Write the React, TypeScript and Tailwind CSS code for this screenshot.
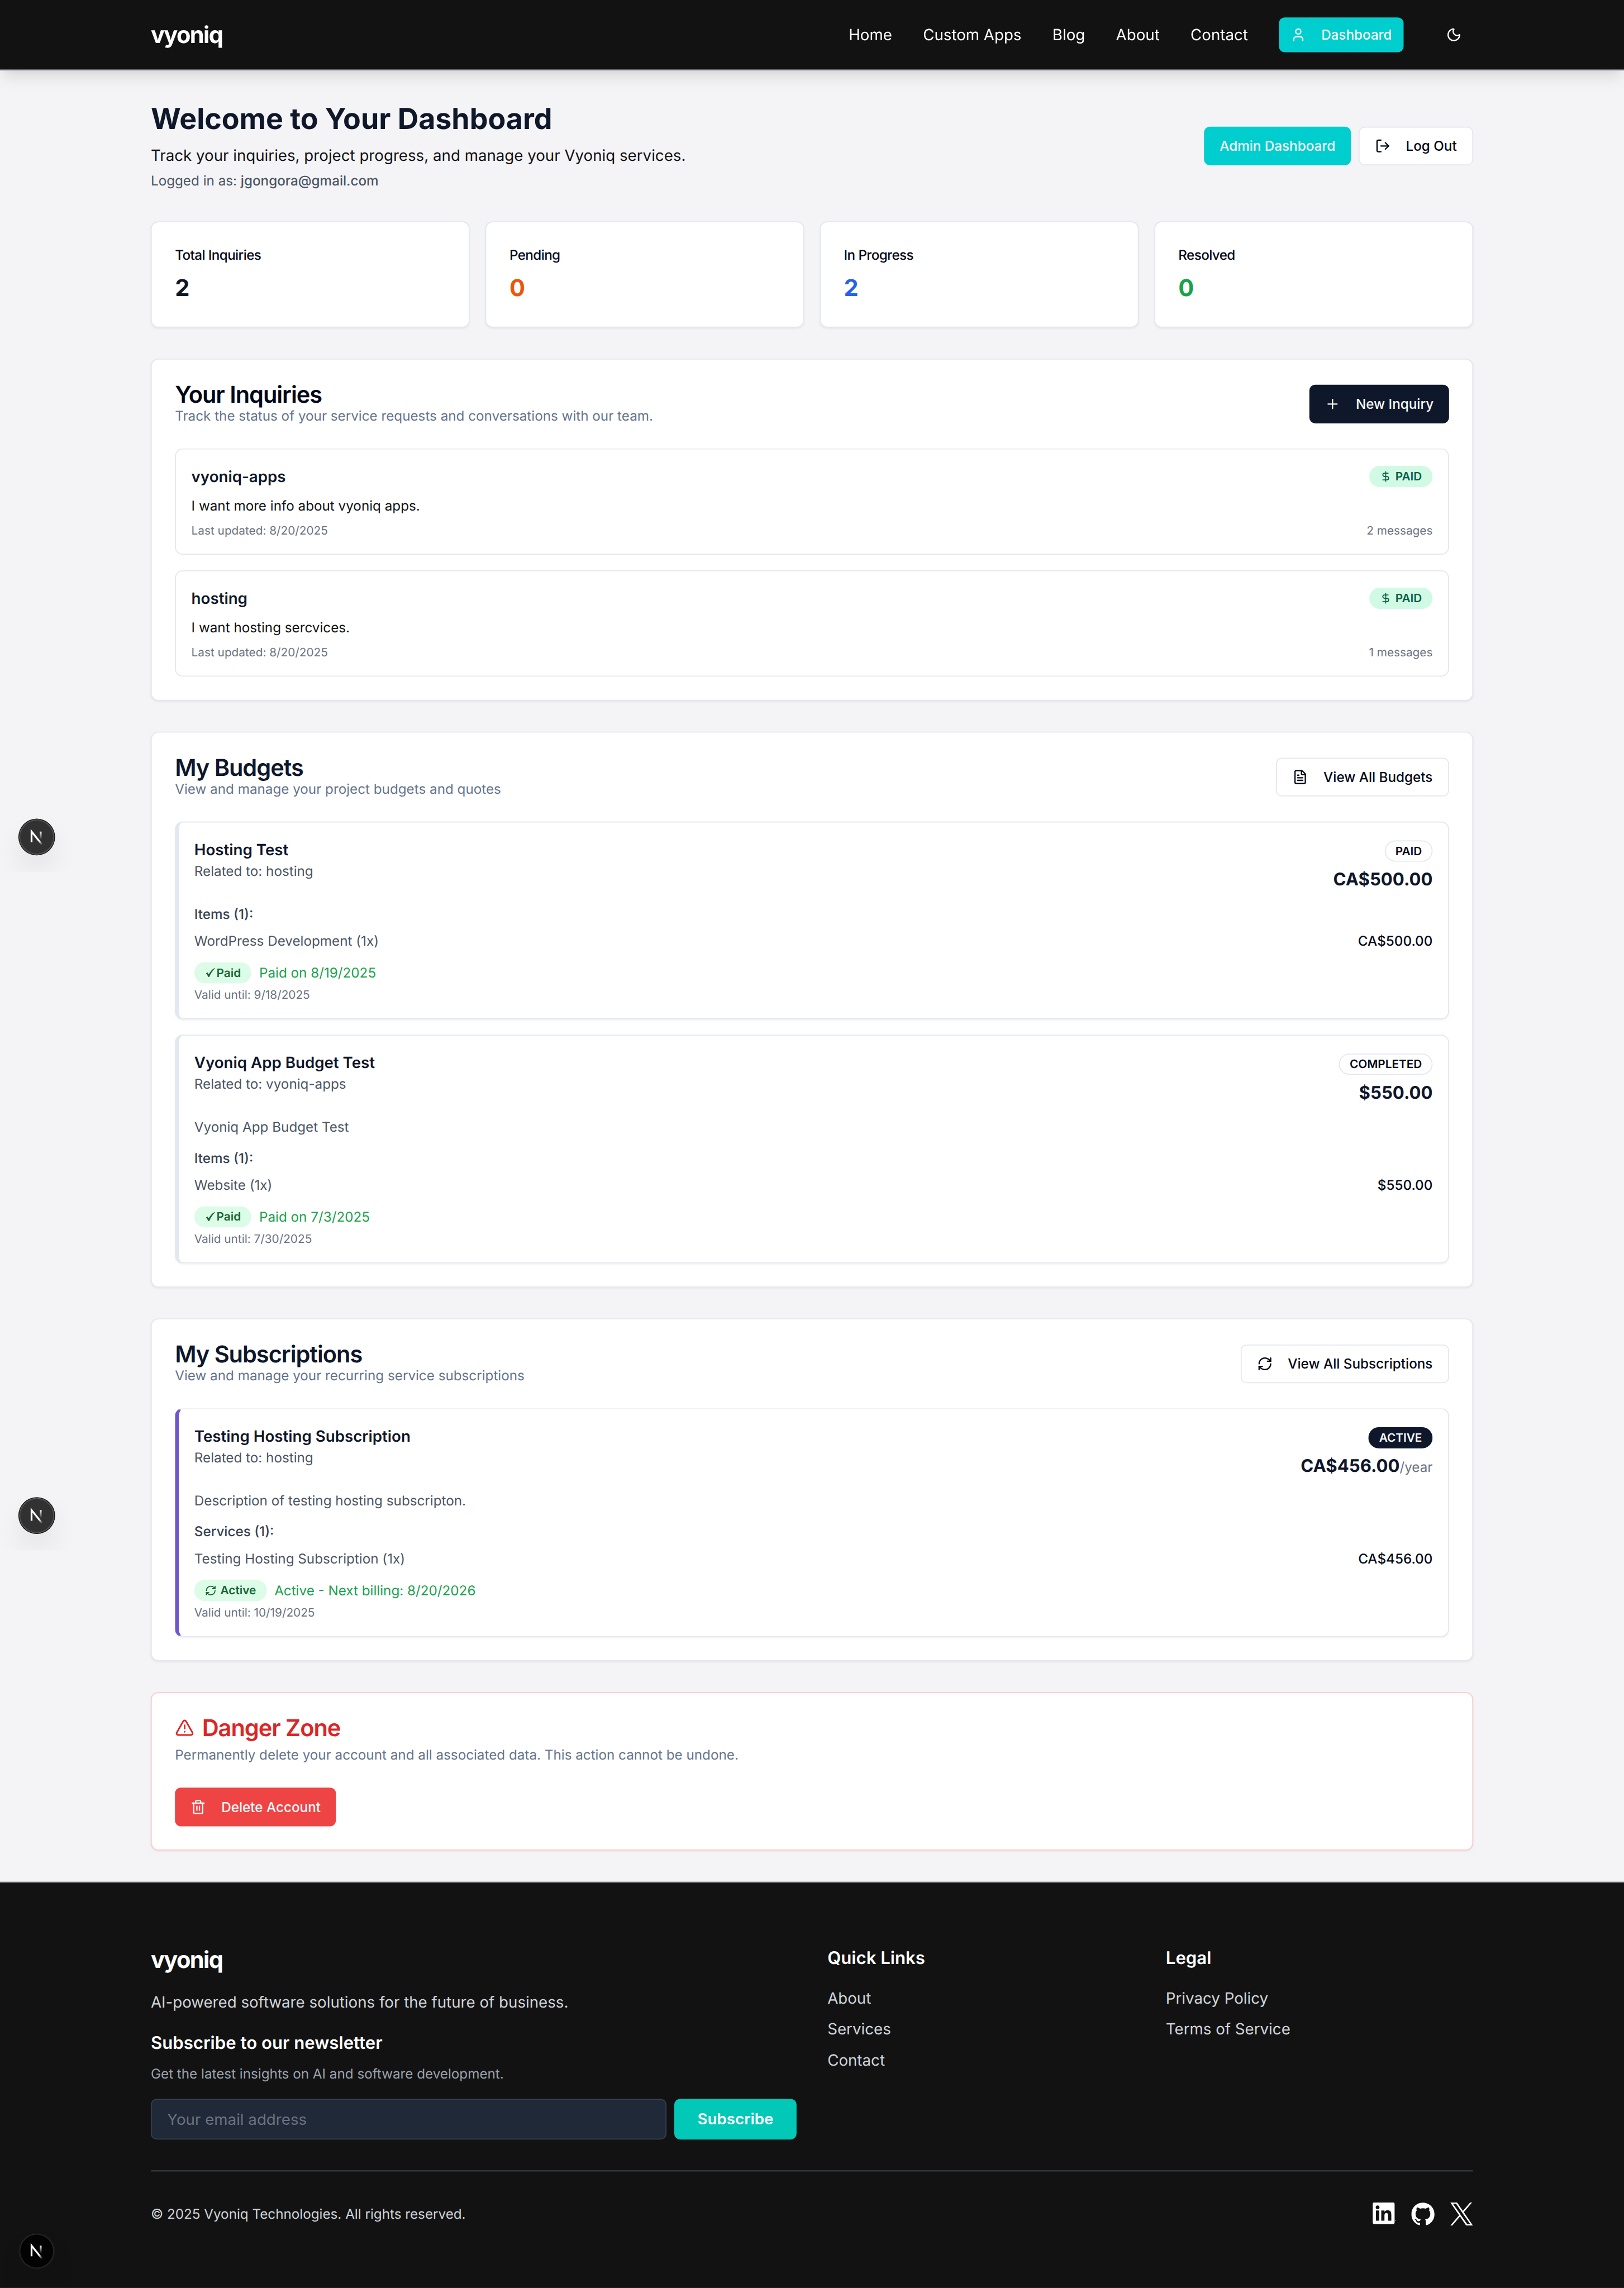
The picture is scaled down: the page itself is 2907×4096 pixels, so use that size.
import React from "react";
import {
  DollarSign,
  FileText,
  LogOut,
  Moon,
  Plus,
  RefreshCw,
  Trash2,
  TriangleAlert,
  User,
} from "lucide-react";

const card =
  "rounded-lg border border-[#e2e8f0] bg-white shadow-[0_1px_2px_0_rgba(0,0,0,0.05)]";
const button =
  "inline-flex items-center justify-center gap-2 whitespace-nowrap rounded-md text-sm font-medium";
const outlineButton = `${button} h-10 border border-[#e2e8f0] bg-white px-4 text-[#020817]`;
const pill =
  "inline-flex items-center rounded-full border px-2.5 py-0.5 text-xs font-semibold";

function Header() {
  return (
    <header className="relative z-10 border-b border-[#e2e8f0] bg-[#121212] shadow-[0_10px_15px_-3px_rgba(0,0,0,0.1),0_4px_6px_-4px_rgba(0,0,0,0.1)]">
      <div className="mx-auto flex h-[72px] max-w-[1400px] items-center justify-between px-4">
        <a className="text-2xl font-bold tracking-[-0.038em] text-white">vyoniq</a>
        <nav className="flex items-center gap-8 text-base text-white">
          {["Home", "Custom Apps", "Blog", "About", "Contact"].map((label) => (
            <a key={label}>{label}</a>
          ))}
          <button className={`${button} h-9 bg-[#00cece] px-3 text-white`}>
            <User className="mr-2 size-4" />
            Dashboard
          </button>
          <button className="flex size-10 items-center justify-center">
            <Moon className="size-4" />
          </button>
        </nav>
      </div>
    </header>
  );
}

const stats = [
  { label: "Total Inquiries", value: "2", color: "text-[#0f172a]" },
  { label: "Pending", value: "0", color: "text-[#ea580c]" },
  { label: "In Progress", value: "2", color: "text-[#2563eb]" },
  { label: "Resolved", value: "0", color: "text-[#16a34a]" },
];

function SectionHeader({
  title,
  description,
  color,
  children,
}: {
  title: string;
  description: string;
  color: string;
  children: React.ReactNode;
}) {
  return (
    <div className="flex items-center justify-between p-6">
      <div>
        <h3 className={`text-2xl leading-none font-semibold tracking-tight ${color}`}>{title}</h3>
        <p className="text-sm text-[#64748b]">{description}</p>
      </div>
      {children}
    </div>
  );
}

function Inquiry({ title, text, messages }: { title: string; text: string; messages: string }) {
  return (
    <div className="rounded-lg border border-[#e5e7eb] p-4">
      <div className="mb-2 flex items-center justify-between">
        <h4 className="text-base font-semibold text-[#0f172a]">{title}</h4>
        <span className={`${pill} gap-1 border-transparent bg-[#d1fae5] text-[#065f46]`}>
          <DollarSign className="size-3" />
          PAID
        </span>
      </div>
      <p className="mb-2 text-sm text-[#121212]">{text}</p>
      <div className="flex items-center justify-between text-xs text-[#6b7280]">
        <span>Last updated: 8/20/2025</span>
        <span>{messages}</span>
      </div>
    </div>
  );
}

function CheckMark() {
  return (
    <svg viewBox="0 0 12 12" className="size-3" fill="currentColor">
      <path d="M1.1 6.700 2.500 5.500 4 7.500C5.300 4.900 7.200 2.600 9.900 1L10.300 1.500C7.800 3.900 6 6.700 4.500 10.300L3.500 10.300C2.900 8.900 2.100 7.700 1.100 6.700Z" />
    </svg>
  );
}

function Agreement({
  title,
  related,
  description,
  status,
  statusClass,
  total,
  period,
  itemsLabel,
  item,
  itemPrice,
  badge,
  note,
  valid,
  accent,
}: {
  title: string;
  related: string;
  description?: string;
  status: string;
  statusClass: string;
  total: string;
  period?: string;
  itemsLabel: string;
  item: string;
  itemPrice: string;
  badge: React.ReactNode;
  note: string;
  valid: string;
  accent: string;
}) {
  return (
    <div className={`${card} border-l-4 p-4 ${accent}`}>
      <div className="mb-3 flex items-start justify-between">
        <div>
          <h4 className="text-base font-semibold text-[#0f172a]">{title}</h4>
          <p className="text-sm text-[#4b5563]">Related to: {related}</p>
        </div>
        <div className="text-right">
          <div className={`${pill} ${statusClass}`}>{status}</div>
          <p className="mt-1 text-lg font-bold text-[#0f172a]">
            {total}
            {period && <span className="text-sm font-normal text-[#6b7280]">{period}</span>}
          </p>
        </div>
      </div>
      {description && <p className="mb-3 text-sm text-[#4b5563]">{description}</p>}
      <p className="mb-2 text-sm font-medium text-[#374151]">{itemsLabel}</p>
      <div className="mb-3 flex justify-between text-sm">
        <span className="text-[#4b5563]">{item}</span>
        <span className="font-medium text-[#020817]">{itemPrice}</span>
      </div>
      <div className="flex items-center gap-2">
        <span className={`${pill} border-transparent bg-[#dcfce7] text-[#166534]`}>{badge}</span>
        <span className="text-sm text-[#16a34a]">{note}</span>
      </div>
      <p className="mt-1 text-xs text-[#6b7280]">{valid}</p>
    </div>
  );
}

function Main() {
  return (
    <main className="mx-auto max-w-[1400px] px-4 py-8">
      <div className="mb-8 flex items-center justify-between">
        <div>
          <h1 className="text-3xl font-bold text-[#0f172a]">Welcome to Your Dashboard</h1>
          <p className="mt-2 text-base text-[#121212]">
            Track your inquiries, project progress, and manage your Vyoniq services.
          </p>
          <p className="mt-1 text-sm text-[#4b5563]">
            Logged in as: <span className="font-medium">jgongora@gmail.com</span>
          </p>
        </div>
        <div className="flex gap-2">
          <button className={`${button} h-10 bg-[#00cece] px-4 text-white`}>Admin Dashboard</button>
          <button className={outlineButton}>
            <LogOut className="mr-2 size-4" />
            Log Out
          </button>
        </div>
      </div>

      <div className="mb-8 grid grid-cols-4 gap-4">
        {stats.map((s) => (
          <div key={s.label} className={`${card} p-6`}>
            <h3 className="mb-2 text-sm font-medium tracking-tight text-[#020817]">{s.label}</h3>
            <div className={`text-2xl font-bold ${s.color}`}>{s.value}</div>
          </div>
        ))}
      </div>

      <section className={`${card} mb-8`}>
        <SectionHeader
          title="Your Inquiries"
          description="Track the status of your service requests and conversations with our team."
          color="text-[#020817]"
        >
          <button className={`${button} h-10 bg-[#0f172a] px-4 text-[#f8fafc]`}>
            <Plus className="mr-2 size-4" />
            New Inquiry
          </button>
        </SectionHeader>
        <div className="space-y-4 px-6 pb-6">
          <Inquiry
            title="vyoniq-apps"
            text="I want more info about vyoniq apps."
            messages="2 messages"
          />
          <Inquiry title="hosting" text="I want hosting sercvices." messages="1 messages" />
        </div>
      </section>

      <section className={`${card} mb-8`}>
        <SectionHeader
          title="My Budgets"
          description="View and manage your project budgets and quotes"
          color="text-[#0f172a]"
        >
          <button className={outlineButton}>
            <FileText className="mr-2 size-4" />
            View All Budgets
          </button>
        </SectionHeader>
        <div className="space-y-4 px-6 pb-6">
          <Agreement
            title="Hosting Test"
            related="hosting"
            status="PAID"
            statusClass="border-[#e2e8f0] text-[#020817]"
            total="CA$500.00"
            itemsLabel="Items (1):"
            item="WordPress Development (1x)"
            itemPrice="CA$500.00"
            badge={
              <>
                <CheckMark />
                Paid
              </>
            }
            note="Paid on 8/19/2025"
            valid="Valid until: 9/18/2025"
            accent="border-l-[#e2e8f0]"
          />
          <Agreement
            title="Vyoniq App Budget Test"
            related="vyoniq-apps"
            description="Vyoniq App Budget Test"
            status="COMPLETED"
            statusClass="border-[#e2e8f0] text-[#020817]"
            total="$550.00"
            itemsLabel="Items (1):"
            item="Website (1x)"
            itemPrice="$550.00"
            badge={
              <>
                <CheckMark />
                Paid
              </>
            }
            note="Paid on 7/3/2025"
            valid="Valid until: 7/30/2025"
            accent="border-l-[#e2e8f0]"
          />
        </div>
      </section>

      <section className={`${card} mb-8`}>
        <SectionHeader
          title="My Subscriptions"
          description="View and manage your recurring service subscriptions"
          color="text-[#0f172a]"
        >
          <button className={outlineButton}>
            <RefreshCw className="mr-2 size-4" />
            View All Subscriptions
          </button>
        </SectionHeader>
        <div className="px-6 pb-6">
          <Agreement
            title="Testing Hosting Subscription"
            related="hosting"
            description="Description of testing hosting subscripton."
            status="ACTIVE"
            statusClass="border-transparent bg-[#0f172a] text-[#f8fafc]"
            total="CA$456.00"
            period="/year"
            itemsLabel="Services (1):"
            item="Testing Hosting Subscription (1x)"
            itemPrice="CA$456.00"
            badge={
              <>
                <RefreshCw className="mr-1 size-3" />
                Active
              </>
            }
            note="Active - Next billing: 8/20/2026"
            valid="Valid until: 10/19/2025"
            accent="border-l-[#6e56cf]"
          />
        </div>
      </section>

      <section className="rounded-lg border border-[#fecaca] bg-white p-6 shadow-[0_1px_2px_0_rgba(0,0,0,0.05)]">
        <h3 className="flex items-center gap-2 text-2xl leading-none font-semibold tracking-tight text-[#dc2626]">
          <TriangleAlert className="size-5" />
          Danger Zone
        </h3>
        <p className="mt-1.5 mb-6 text-sm text-[#64748b]">
          Permanently delete your account and all associated data. This action cannot be undone.
        </p>
        <div className="flex">
          <button className={`${button} h-10 bg-[#ef4444] px-4 text-[#f8fafc]`}>
            <Trash2 className="mr-2 size-4" />
            Delete Account
          </button>
        </div>
      </section>
    </main>
  );
}

function LinkColumn({ title, links }: { title: string; links: string[] }) {
  return (
    <div>
      <h4 className="mb-4 text-lg font-semibold text-white">{title}</h4>
      <ul className="space-y-2 text-base text-[#d1d5db]">
        {links.map((l) => (
          <li key={l}>{l}</li>
        ))}
      </ul>
    </div>
  );
}

function Footer() {
  return (
    <footer className="border-t border-[#e5e7eb] bg-[#121212]">
      <div className="mx-auto max-w-[1400px] px-4 py-16">
        <div className="grid grid-cols-4 gap-8">
          <div className="col-span-2">
            <div className="mb-4 text-2xl font-bold tracking-[-0.038em] text-white">vyoniq</div>
            <p className="mb-4 text-base text-[#d1d5db]">
              AI-powered software solutions for the future of business.
            </p>
            <h4 className="mb-2 text-lg font-semibold text-white">Subscribe to our newsletter</h4>
            <p className="mb-4 text-sm text-[#9ca3af]">
              Get the latest insights on AI and software development.
            </p>
            <form className="flex gap-2">
              <input
                placeholder="Your email address"
                className="h-[42px] min-w-0 flex-1 rounded-md border border-[#374151] bg-[#1f2937] px-4 py-2 text-base text-white placeholder:text-[#6b7280]"
              />
              <button className="h-[42px] rounded-md bg-[#02c8b7] px-6 text-base font-semibold text-white">
                Subscribe
              </button>
            </form>
          </div>
          <LinkColumn title="Quick Links" links={["About", "Services", "Contact"]} />
          <LinkColumn title="Legal" links={["Privacy Policy", "Terms of Service"]} />
        </div>
        <div className="mt-8 flex items-center justify-between border-t border-[#4b5563] pt-8">
          <p className="text-sm text-[#d1d5db]">
            © 2025 Vyoniq Technologies. All rights reserved.
          </p>
          <div className="flex gap-4 text-white">
            <svg viewBox="0 0 24 24" className="size-6" fill="currentColor">
              <path
                fillRule="evenodd"
                d="M1.700 0H21.100C22 0 22.700.700 22.700 1.600V20.900C22.700 21.800 22 22.500 21.100 22.500H1.700C.8 22.500 0 21.800 0 20.900V1.600C0 .7.8 0 1.700 0ZM3.400 8.500V19H6.800V8.500ZM5.100 3.200A1.950 1.950 0 1 0 5.100 7.100 1.950 1.950 0 1 0 5.100 3.200ZM8.900 8.500V19H12.200V13.800C12.200 12.400 12.500 11.100 14.200 11.100 15.900 11.100 15.900 12.700 15.900 13.900V19H19.300V13.200C19.300 10.400 18.700 8.200 15.400 8.200 13.800 8.200 12.700 9.100 12.200 9.900V8.500Z"
              />
              <circle cx="23.500" cy="18.600" r=".4" />
            </svg>
            <svg viewBox="0 0 24 24" className="size-6" fill="currentColor">
              <path d="M12 .297c-6.630 0-12 5.373-12 12 0 5.303 3.438 9.800 8.205 11.385.6.113.820-.258.820-.577 0-.285-.010-1.040-.015-2.040-3.338.724-4.042-1.610-4.042-1.610C4.422 18.070 3.633 17.700 3.633 17.700c-1.087-.744.084-.729.084-.729 1.205.084 1.838 1.236 1.838 1.236 1.070 1.835 2.809 1.305 3.495.998.108-.776.417-1.305.760-1.605-2.665-.3-5.466-1.332-5.466-5.930 0-1.310.465-2.380 1.235-3.220-.135-.303-.540-1.523.105-3.176 0 0 1.005-.322 3.300 1.230.960-.267 1.980-.399 3-.405 1.020.006 2.040.138 3 .405 2.280-1.552 3.285-1.230 3.285-1.230.645 1.653.240 2.873.120 3.176.765.840 1.230 1.910 1.230 3.220 0 4.610-2.805 5.625-5.475 5.920.420.360.810 1.096.810 2.220 0 1.606-.015 2.896-.015 3.286 0 .315.210.690.825.570C20.565 22.092 24 17.592 24 12.297c0-6.627-5.373-12-12-12" />
            </svg>
            <svg viewBox="0 0 1200 1227" className="size-6" fill="currentColor">
              <path d="M714.163 519.284L1160.890 0H1055.030L667.137 450.887L357.328 0H0L468.492 681.821L0 1226.370H105.866L515.491 750.218L842.672 1226.370H1200L714.137 519.284H714.163ZM569.165 687.828L521.697 619.934L144.011 79.6944H306.615L611.412 515.685L658.880 583.579L1055.080 1150.300H892.476L569.165 687.854V687.828Z" />
            </svg>
          </div>
        </div>
      </div>
    </footer>
  );
}

function DevBadge({ place, id }: { place: string; id: string }) {
  return (
    <div className={`absolute left-0 z-20 h-[72px] w-[120px] overflow-hidden ${place}`}>
      <div className="mt-[18px] ml-5 size-9 rounded-full bg-black/80 shadow-[0_0_0_1px_#171717,inset_0_0_0_1px_rgba(255,255,255,0.14),0_16px_32px_-8px_rgba(0,0,0,0.24)]">
        <svg viewBox="0 0 36 36" className="size-9" fill="none">
          <g transform="translate(10.300 10.800)" strokeWidth="1.860">
            <path d="M13.300 15.200 2.340 1.500V12.600" stroke={`url(#${id}-a)`} />
            <path d="M11.825 1.500V13.100" stroke={`url(#${id}-b)`} />
          </g>
          <defs>
            <linearGradient
              id={`${id}-a`}
              x1="9.956"
              y1="11.123"
              x2="15.478"
              y2="17.967"
              gradientUnits="userSpaceOnUse"
            >
              <stop stopColor="white" />
              <stop offset="0.604" stopColor="white" stopOpacity="0" />
              <stop offset="1" stopColor="white" stopOpacity="0" />
            </linearGradient>
            <linearGradient
              id={`${id}-b`}
              x1="11.822"
              y1="1.400"
              x2="11.791"
              y2="9.625"
              gradientUnits="userSpaceOnUse"
            >
              <stop stopColor="white" />
              <stop offset="1" stopColor="white" stopOpacity="0" />
            </linearGradient>
          </defs>
        </svg>
      </div>
    </div>
  );
}

export default function App() {
  return (
    <div className="h-[4096px] w-[2907px] overflow-hidden bg-[#121212]">
      <div className="w-[3360px] origin-top-left scale-[0.86518]">
        <div className="relative w-[1680px] bg-[#f4f4f7] font-[Inter,sans-serif] antialiased [text-rendering:geometricPrecision] [zoom:2]">
          <Header />
          <Main />
          <Footer />
          <DevBadge id="n1" place="top-[830px]" />
          <DevBadge id="n2" place="top-[1532px]" />
          <DevBadge id="n3" place="top-[2293px]" />
        </div>
      </div>
    </div>
  );
}
